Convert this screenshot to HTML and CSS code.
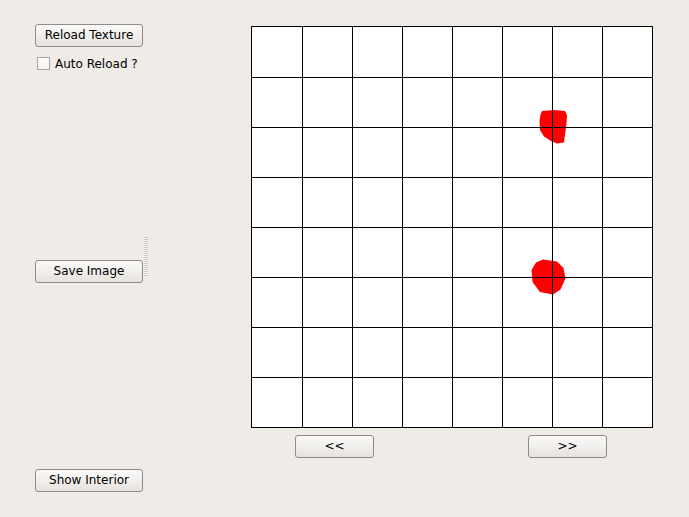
FILE: index.html
```html
<!DOCTYPE html>
<html>
<head>
<meta charset="utf-8">
<link rel="stylesheet" href="styles.css">
</head>
<body>
<div class="app">
  <div class="left">
    <button class="btn btn-reload">Reload Texture</button>
    <label class="check"><span class="box"></span><span>Auto Reload ?</span></label>
    <button class="btn btn-save">Save Image</button>
    <button class="btn btn-interior">Show Interior</button>
  </div>
  <div class="handle"></div>
  <div class="right">
    <svg class="grid" width="402" height="402" viewBox="0 0 402 402">
      <rect x="0" y="0" width="402" height="402" fill="#ffffff"/>
      <path fill="#ff0000" d="M291 85 L303 84 L314 85 L316 89 L315.5 97 L314.5 105 L313.5 112 L313 116.5 L306 117.5 L300 115 L293 110.5 L289 104 L288.5 95 L289.5 88.5 Z"/>
      <path fill="#ff0000" d="M292 233.5 L306 235.5 L312.5 242 L314.5 252.5 L309.5 263.5 L302 268.5 L289 266 L281.5 256 L280.5 244 L285 236.5 Z"/>
      <g stroke="#000" stroke-width="1" shape-rendering="crispEdges" fill="none">
        <path d="M0.5 0 V402 M51.5 0 V402 M101.5 0 V402 M151.5 0 V402 M201.5 0 V402 M251.5 0 V402 M301.5 0 V402 M351.5 0 V402 M401.5 0 V402"/>
        <path d="M0 0.5 H402 M0 51.5 H402 M0 101.5 H402 M0 151.5 H402 M0 201.5 H402 M0 251.5 H402 M0 301.5 H402 M0 351.5 H402 M0 401.5 H402"/>
      </g>
    </svg>
    <div class="nav">
      <button class="btn btn-nav btn-prev">&lt;&lt;</button>
      <button class="btn btn-nav btn-next">&gt;&gt;</button>
    </div>
  </div>
</div>
</body>
</html>
```
FILE: styles.css
```css
html, body {
  margin: 0;
  padding: 0;
  background: #efebe7;
  width: 689px;
  height: 517px;
  overflow: hidden;
}
body {
  font-family: "DejaVu Sans", "Liberation Sans", sans-serif;
  font-size: 12px;
  color: #000;
}
.app {
  display: flex;
  flex-direction: row;
  padding: 24px 0 0 35px;
}
.left {
  display: flex;
  flex-direction: column;
  width: 108px;
}
.btn {
  box-sizing: border-box;
  font-family: "DejaVu Sans", "Liberation Sans", sans-serif;
  font-size: 12px;
  color: #000;
  border: 1px solid #8f8b86;
  border-radius: 3px;
  background: linear-gradient(#faf9f8, #f1efec 50%, #e6e2dc);
  padding: 0;
  margin: 0;
  height: 23px;
  line-height: 21px;
  text-align: center;
}
.btn-reload, .btn-save, .btn-interior {
  width: 108px;
}
.check {
  display: flex;
  align-items: center;
  gap: 5px;
  margin-top: 10px;
  margin-left: 2px;
  height: 13px;
  font-size: 12px;
}
.box {
  box-sizing: border-box;
  width: 13px;
  height: 13px;
  border: 1px solid #a9a49e;
  background: linear-gradient(#ffffff, #f4f2ef);
}
.btn-save {
  margin-top: 190px;
}
.btn-interior {
  margin-top: 186px;
}
.handle {
  width: 4px;
  height: 40px;
  margin-top: 213px;
  margin-left: 1px;
  background: repeating-linear-gradient(#c9c6c1 0, #c9c6c1 1px, #f7f6f4 1px, #f7f6f4 2px);
}
.right {
  margin-left: 103px;
  margin-top: 2px;
  display: flex;
  flex-direction: column;
}
.grid {
  display: block;
}
.nav {
  display: flex;
  margin-top: 7px;
  padding-left: 44px;
}
.btn-nav {
  width: 79px;
  height: 23px;
}
.btn-next {
  margin-left: 154px;
}
```
